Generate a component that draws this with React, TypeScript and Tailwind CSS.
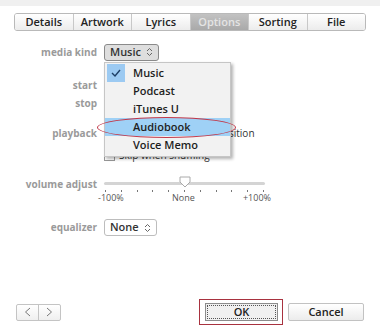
import React from "react";

const tabs = ["Details", "Artwork", "Lyrics", "Options", "Sorting", "File"];
const kinds = ["Music", "Podcast", "iTunes U", "Audiobook", "Voice Memo"];

const Updown = () => (
  <svg width="7" height="10" viewBox="0 0 7 10" className="ml-[5px]">
    <path d="M1 4 L3.5 1.5 L6 4 M1 6 L3.5 8.5 L6 6" fill="none" stroke="#666" strokeWidth="1" />
  </svg>
);

export default function App() {
  return (
    <div className="relative w-[380px] h-[329px] bg-white overflow-hidden font-['Open_Sans',sans-serif] flex flex-col">
      <div className="h-[6px] bg-[#f0f0f0]" />

      {/* Tabs */}
      <div className="mt-[7px] mx-[14px] flex h-[18px] border border-[#b9b9b9] rounded-[3px] overflow-hidden">
        {tabs.map((t, i) => (
          <div
            key={t}
            className={`flex-1 flex items-center justify-center text-[11px] font-semibold ${
              i > 0 ? "border-l border-[#c8c8c8]" : ""
            } ${
              t === "Options"
                ? "bg-gradient-to-b from-[#c2c2c2] to-[#a9a9a9] text-[#e4e4e4]"
                : "bg-gradient-to-b from-white to-[#ececec] text-[#222]"
            }`}
          >
            {t}
          </div>
        ))}
      </div>

      {/* Form */}
      <div className="flex flex-col text-[10px] font-bold text-[#9a9a9a]">
        <div className="mt-[13px] flex items-center h-[16px]">
          <div className="w-[97px] text-right">media kind</div>
          <div className="ml-[7px] h-[17px] px-[5px] flex items-center border border-[#8a8a8a] rounded-[3px] bg-[#dedede] text-[11px] font-semibold text-[#333]">
            Music
            <Updown />
          </div>
        </div>
        <div className="mt-[17px] flex items-center h-[16px]">
          <div className="w-[97px] text-right">start</div>
        </div>
        <div className="mt-[2px] flex items-center h-[16px]">
          <div className="w-[97px] text-right">stop</div>
        </div>
        <div className="mt-[14px] flex items-center h-[16px]">
          <div className="w-[97px] text-right">playback</div>
          <div className="ml-[7px] flex items-center text-[10px] font-normal text-[#333]">
            <div className="w-[11px] h-[11px] border border-[#999] bg-white mr-[4px]" />
            Remember playback position
          </div>
        </div>
        <div className="mt-[6px] flex items-center h-[16px]">
          <div className="w-[97px]" />
          <div className="ml-[7px] flex items-center text-[10px] font-normal text-[#333]">
            <div className="w-[11px] h-[11px] border border-[#999] bg-white mr-[4px]" />
            Skip when shuffling
          </div>
        </div>

        {/* Volume */}
        <div className="mt-[13px] flex items-start">
          <div className="w-[97px] text-right leading-[16px]">volume adjust</div>
          <div className="ml-[7px] w-[161px] flex flex-col">
            <div className="relative h-[14px] flex items-center">
              <div className="w-full h-[3px] bg-[#d4d4d4] rounded-full" />
              <svg width="12" height="12" viewBox="0 0 12 12" className="absolute left-[75px] top-[0px]">
                <path d="M1 1 H11 V6 L6 11 L1 6 Z" fill="white" stroke="#aaa" />
              </svg>
            </div>
            <div className="flex justify-between px-[1px] h-[2px]">
              {Array.from({ length: 11 }, (_, i) => (
                <div key={i} className="w-[1px] h-[2px] bg-[#777]" />
              ))}
            </div>
            <div className="flex justify-between text-[9px] font-normal text-[#555] leading-[11px] -mx-[6px]">
              <span>-100%</span>
              <span>None</span>
              <span>+100%</span>
            </div>
          </div>
        </div>

        <div className="mt-[16px] flex items-center h-[17px]">
          <div className="w-[97px] text-right">equalizer</div>
          <div className="ml-[7px] h-[17px] px-[5px] flex items-center border border-[#bdbdbd] rounded-[3px] bg-white text-[11px] font-semibold text-[#333]">
            None
            <Updown />
          </div>
        </div>
      </div>

      {/* Bottom buttons */}
      <div className="mt-auto mb-[4px] flex items-center px-[16px]">
        <div className="flex h-[17px] border border-[#c4c4c4] rounded-[2px] bg-gradient-to-b from-white to-[#efefef]">
          <div className="w-[22px] flex items-center justify-center border-r border-[#c4c4c4]">
            <svg width="7" height="10" viewBox="0 0 7 10"><path d="M6 1 L1.5 5 L6 9" fill="none" stroke="#777" /></svg>
          </div>
          <div className="w-[21px] flex items-center justify-center">
            <svg width="7" height="10" viewBox="0 0 7 10"><path d="M1 1 L5.5 5 L1 9" fill="none" stroke="#777" /></svg>
          </div>
        </div>
        <div className="ml-auto border border-[#a8323f] pl-[5px] pr-[4px] py-[3px]">
          <div className="w-[73px] h-[18px] border border-[#8c8c8c] bg-[#f0f0f0] p-[1px]">
            <div className="w-full h-full border border-dotted border-[#555] flex items-center justify-center text-[11px] font-semibold text-[#222]">
              OK
            </div>
          </div>
        </div>
        <div className="ml-[5px] w-[76px] h-[18px] border border-[#c2c2c2] rounded-[2px] bg-gradient-to-b from-white to-[#ececec] flex items-center justify-center text-[11px] font-semibold text-[#222]">
          Cancel
        </div>
      </div>

      {/* Dropdown menu */}
      <div className="absolute left-[104px] top-[62px] w-[127px] h-[95px] bg-[#f2f2f2] border border-[#c6c6c6] shadow-[2px_2px_3px_rgba(0,0,0,0.3)] py-[1px] text-[11px] font-semibold text-[#1e1e1e]">
        {kinds.map((k) => (
          <div
            key={k}
            className={`relative h-[18px] flex items-center pl-[28px] ${k === "Audiobook" ? "bg-[#9fd1f6]" : ""}`}
          >
            {k === "Music" && (
              <div className="absolute left-[2px] top-0 w-[18px] h-[18px] bg-[#9ccaf2] flex items-center justify-center">
                <svg width="10" height="8" viewBox="0 0 10 8">
                  <path d="M1 4 L4 7 L9 1" fill="none" stroke="#1d3f66" strokeWidth="1.4" />
                </svg>
              </div>
            )}
            {k}
          </div>
        ))}
      </div>

      {/* Annotation ellipse */}
      <div className="absolute left-[97px] top-[117px] w-[139px] h-[21px] rounded-[50%] border border-[#c2394a]" />
    </div>
  );
}
